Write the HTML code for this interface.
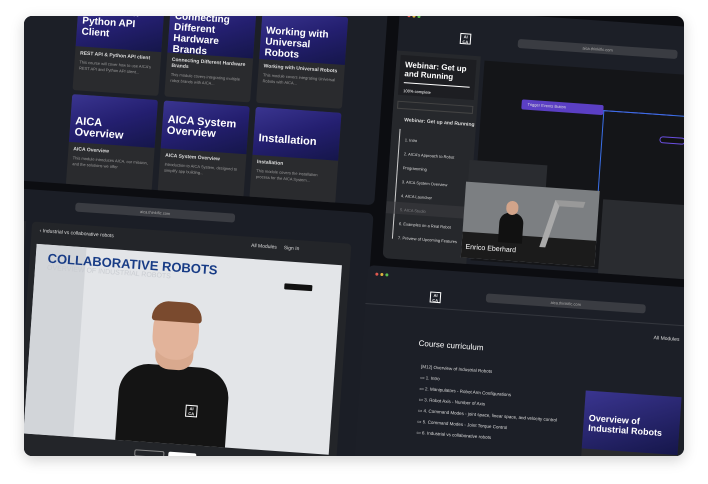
<!DOCTYPE html>
<html><head><meta charset="utf-8"><style>
*{box-sizing:border-box;margin:0;padding:0}
body{width:708px;height:484px;background:#fff;font-family:"Liberation Sans",sans-serif;overflow:hidden;position:relative}
#box{position:absolute;left:24px;top:16px;width:660px;height:440px;border-radius:8px;background:#0c0d11;overflow:hidden;box-shadow:0 4px 14px rgba(0,0,0,.18)}
#rot{position:absolute;left:0;top:0;width:660px;height:440px;transform:rotate(4deg);transform-origin:330px 220px}
.p{position:absolute;border-radius:6px;overflow:hidden}
.card{position:absolute;width:86px;height:92px;background:#2a2b2e;border-radius:3px;overflow:hidden}
.card .im{height:48px;background:linear-gradient(160deg,#3a3590 0%,#241f70 50%,#15164a 100%);color:#fff;font-weight:bold;font-size:10px;line-height:11px;padding:6px 5px}
.card .t{color:#ddd;font-size:5px;font-weight:bold;padding:4px 5px 1px}
.card .d{color:#999;font-size:4px;padding:2px 5px;line-height:5.5px}
.bar{position:absolute;height:9px;background:#3a3c42;border-radius:3px;color:#aaa;font-size:4px;text-align:center;line-height:9px}
.logo{position:absolute;width:11px;height:11px;border:1px solid #fff;color:#fff;font-size:4px;font-weight:bold;line-height:5px;text-align:center}
.w{color:#ddd;font-size:5px;position:absolute}
</style></head><body>
<div id="box"><div id="rot">
<!-- TL -->
<div class="p" style="left:-30px;top:-40px;width:378px;height:228px;background:#1c1f27">
 <div class="card" style="left:69px;top:42px"><div class="im">REST API &amp;<br>Python API Client</div><div class="t">REST API &amp; Python API client</div><div class="d">This course will cover how to use AICA's REST API and Python API client...</div></div>
 <div class="card" style="left:161px;top:42px"><div class="im">Connecting<br>Different<br>Hardware Brands</div><div class="t">Connecting Different Hardware Brands</div><div class="d">This module covers integrating multiple robot brands with AICA...</div></div>
 <div class="card" style="left:253px;top:42px"><div class="im" style="padding-top:14px">Working with<br>Universal Robots</div><div class="t">Working with Universal Robots</div><div class="d">This module covers integrating Universal Robots with AICA...</div></div>
 <div class="card" style="left:69px;top:138px"><div class="im" style="padding-top:22px;font-size:11px">AICA Overview</div><div class="t">AICA Overview</div><div class="d">This module introduces AICA, our mission, and the solutions we offer</div></div>
 <div class="card" style="left:161px;top:138px"><div class="im" style="padding-top:14px;font-size:11px">AICA System<br>Overview</div><div class="t">AICA System Overview</div><div class="d">Introduction to AICA System, designed to simplify app building...</div></div>
 <div class="card" style="left:253px;top:138px"><div class="im" style="padding-top:26px;font-size:11px">Installation</div><div class="t">Installation</div><div class="d">This module covers the installation process for the AICA System...</div></div>
</div>
<!-- BL -->
<div class="p" style="left:-50px;top:196px;width:398px;height:290px;background:#1b1e26">
 <div class="logo" style="left:30px;top:10px">AI<br>CA</div>
 <div class="bar" style="left:100px;top:10px;width:160px">aica.thinkific.com</div>
 <div style="position:absolute;left:0;top:32px;width:52px;height:260px;background:#25272c"></div>
 <div style="position:absolute;left:58px;top:32px;width:320px;height:240px;background:#232529;border-radius:4px">
  <div class="w" style="left:8px;top:6px">&lsaquo; Industrial vs collaborative robots</div>
  <div class="w" style="left:220px;top:6px">All Modules &nbsp;&nbsp;&nbsp; Sign In</div>
  <div style="position:absolute;left:6px;top:22px;width:306px;height:190px;background:#e3e5e8;overflow:hidden">
   <div style="position:absolute;left:0;top:0;width:50px;height:190px;background:#d2d5d9"></div>
   <div style="position:absolute;left:12px;top:6px;color:#183c86;font-weight:bold;font-size:13px">COLLABORATIVE ROBOTS</div>
   <div style="position:absolute;left:12px;top:20px;color:#c9ccd1;font-size:7px">OVERVIEW OF INDUSTRIAL ROBOTS</div>
   <div style="position:absolute;left:250px;top:22px;width:28px;height:6px;background:#111;border-radius:1px"></div>
   <div style="position:absolute;left:92px;top:112px;width:110px;height:90px;background:#141414;border-radius:30px 30px 0 0"></div>
   <div style="position:absolute;left:126px;top:86px;width:38px;height:30px;background:#d9a98e;border-radius:0 0 14px 14px"></div>
   <div style="position:absolute;left:122px;top:54px;width:46px;height:52px;background:#e2b39a;border-radius:20px 20px 22px 22px"></div>
   <div style="position:absolute;left:120px;top:48px;width:50px;height:20px;background:#7a4a2e;border-radius:22px 22px 4px 4px"></div>
   <div class="logo" style="left:160px;top:150px;width:12px;height:12px">AI<br>CA</div>
  </div>
  <div style="position:absolute;left:118px;top:220px;width:30px;height:7px;border:1px solid #888;border-radius:2px"></div>
  <div style="position:absolute;left:152px;top:220px;width:28px;height:7px;background:#fff;border-radius:2px"></div>
 </div>
</div>
<!-- TR -->
<div class="p" style="left:360px;top:-12px;width:330px;height:252px;background:#1c1f27">
 <div style="position:absolute;left:8px;top:7px;width:3px;height:3px;border-radius:2px;background:#e0584f;box-shadow:5px 0 #e1b23e,10px 0 #5bbd4f"></div>
 <div class="logo" style="left:62px;top:22px">AI<br>CA</div>
 <div class="bar" style="left:120px;top:24px;width:160px">aica.thinkific.com</div>
 <div style="position:absolute;left:0;top:44px;width:84px;height:210px;background:#26282c">
  <div style="position:absolute;left:4px;top:4px;width:76px;height:40px;background:#1d1e22;color:#fff;font-weight:bold;font-size:8px;padding:5px">Webinar: Get up and Running<div style="height:1px;background:#fff;margin:4px 0 2px"></div><span style="font-size:4px;font-weight:normal">100% complete</span></div>
  <div style="position:absolute;left:4px;top:50px;width:76px;height:8px;border:1px solid #444"></div>
  <div class="w" style="left:12px;top:66px;font-weight:bold">Webinar: Get up and Running</div>
  <div style="position:absolute;left:8px;top:78px;width:1px;height:110px;background:#ccc"></div>
  <div class="w" style="left:14px;top:82px;font-size:4px;line-height:14px">1. Intro<br>2. AICA's Approach to Robot Programming<br>3. AICA System Overview<br>4. AICA Launcher<br>5. AICA Studio<br>6. Examples on a Real Robot<br>7. Preview of Upcoming Features</div>
  <div style="position:absolute;left:0;top:151px;width:84px;height:12px;background:#3a3b3f;opacity:.6"></div>
 </div>
 <div style="position:absolute;left:88px;top:48px;width:240px;height:200px;background:#141518">
  <div style="position:absolute;left:40px;top:36px;width:82px;height:10px;background:#5b3fc4;border-radius:2px;color:#ddd;font-size:4px;line-height:10px;padding-left:6px">Trigger Events Button</div>
  <div style="position:absolute;left:122px;top:41px;width:70px;height:1px;background:#6a4fe0"></div>
  <div style="position:absolute;left:122px;top:41px;width:1px;height:150px;background:#3a6fe8"></div>
  <div style="position:absolute;left:122px;top:41px;width:120px;height:1px;background:#3a6fe8"></div>
  <div style="position:absolute;left:180px;top:63px;width:26px;height:7px;border:1px solid #6a4fe0;border-radius:4px;background:#111"></div>
  <div style="position:absolute;left:-8px;top:100px;width:78px;height:60px;background:#2a2c30"></div>
  <div style="position:absolute;left:128px;top:130px;width:112px;height:80px;background:#2a2c30"></div>
  <div style="position:absolute;left:-10px;top:122px;width:134px;height:76px;background:#7c7f82;overflow:hidden">
   <div style="position:absolute;left:0;top:50px;width:134px;height:26px;background:#1b1b1b"></div>
   <div style="position:absolute;left:36px;top:28px;width:24px;height:30px;background:#111;border-radius:10px 10px 0 0"></div>
   <div style="position:absolute;left:42px;top:16px;width:12px;height:14px;background:#d2a48a;border-radius:6px"></div>
   <div style="position:absolute;left:84px;top:12px;width:30px;height:48px;border-left:6px solid #aaa;border-top:6px solid #999;transform:skewX(-15deg)"></div>
   <div style="position:absolute;left:4px;top:62px;color:#fff;font-size:7px">Enrico Eberhard</div>
  </div>
 </div>
</div>
<!-- BR -->
<div class="p" style="left:346px;top:248px;width:350px;height:230px;background:#1c1f27">
 <div style="position:absolute;left:8px;top:7px;width:3px;height:3px;border-radius:2px;background:#e0584f;box-shadow:5px 0 #e1b23e,10px 0 #5bbd4f"></div>
 <div class="logo" style="left:64px;top:22px">AI<br>CA</div>
 <div class="bar" style="left:120px;top:20px;width:160px">aica.thinkific.com</div>
 <div style="position:absolute;left:0;top:38px;width:350px;height:1px;background:#33363d"></div>
 <div class="w" style="left:290px;top:50px">All Modules</div>
 <div style="position:absolute;left:56px;top:70px;color:#fff;font-size:8px">Course curriculum</div>
 <div class="w" style="left:60px;top:92px;font-size:4.5px;line-height:11px">[M12] Overview of Industrial Robots<br>&#9645; 1. Intro<br>&#9645; 2. Manipulators - Robot Arm Configurations<br>&#9645; 3. Robot Axis - Number of Axis<br>&#9645; 4. Command Modes - joint space, linear space, and velocity control<br>&#9645; 5. Command Modes - Joint Torque Control<br>&#9645; 6. Industrial vs collaborative robots</div>
 <div style="position:absolute;left:226px;top:110px;width:96px;height:100px;background:#2a2b2e">
  <div style="height:58px;background:linear-gradient(160deg,#3a3590,#15164a);color:#fff;font-weight:bold;font-size:9px;padding:22px 5px 0;line-height:10px">Overview of<br>Industrial Robots</div>
  <div class="w" style="left:6px;top:66px;color:#fff">About this course</div>
 </div>
</div>
</div></div>
</body></html>
